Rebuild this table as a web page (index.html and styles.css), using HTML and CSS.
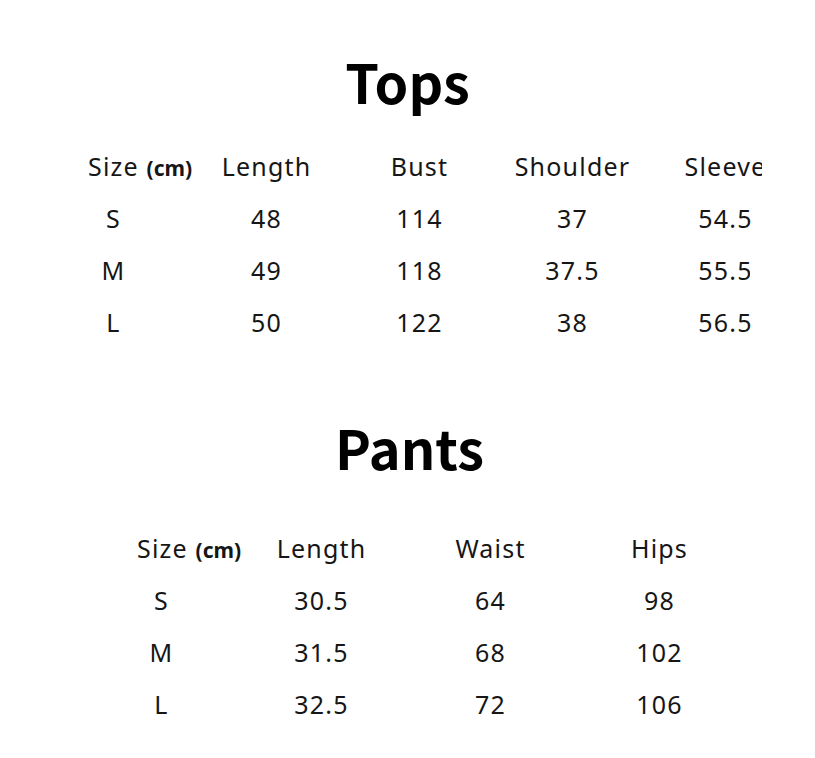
FILE: index.html
```html
<!DOCTYPE html>
<html>
<head>
<meta charset="utf-8">
<link rel="stylesheet" href="styles.css">
</head>
<body>
<div class="page">
  <section class="block tops">
    <h1 class="title">Tops</h1>
    <div class="clip">
      <div class="grid five">
        <div class="cell head first">Size <b class="unit">(cm)</b></div>
        <div class="cell head">Length</div>
        <div class="cell head">Bust</div>
        <div class="cell head">Shoulder</div>
        <div class="cell head">Sleeve</div>
        <div class="cell">S</div><div class="cell">48</div><div class="cell">114</div><div class="cell">37</div><div class="cell">54.5</div>
        <div class="cell">M</div><div class="cell">49</div><div class="cell">118</div><div class="cell">37.5</div><div class="cell cut">55.5</div>
        <div class="cell">L</div><div class="cell">50</div><div class="cell">122</div><div class="cell">38</div><div class="cell">56.5</div>
      </div>
    </div>
  </section>
  <section class="block pants">
    <h1 class="title">Pants</h1>
    <div class="grid four">
      <div class="cell head first">Size <b class="unit">(cm)</b></div>
      <div class="cell head">Length</div>
      <div class="cell head">Waist</div>
      <div class="cell head">Hips</div>
      <div class="cell">S</div><div class="cell">30.5</div><div class="cell">64</div><div class="cell">98</div>
      <div class="cell">M</div><div class="cell">31.5</div><div class="cell">68</div><div class="cell">102</div>
      <div class="cell">L</div><div class="cell">32.5</div><div class="cell">72</div><div class="cell">106</div>
    </div>
  </section>
</div>
</body>
</html>
```
FILE: styles.css
```css
html, body {
  margin: 0;
  padding: 0;
  background: #fff;
}
body {
  width: 815px;
  height: 758px;
  overflow: hidden;
  font-family: "Noto Sans", "Noto Sans CJK SC", sans-serif;
  color: #161616;
}
.page {
  display: flex;
  flex-direction: column;
}
.title {
  margin: 0;
  font-family: "Noto Sans CJK SC", "Noto Sans", sans-serif;
  font-size: 54px;
  font-weight: 700;
  line-height: 60px;
  text-align: center;
  color: #000;
}
.tops {
  padding-top: 51px;
}
.tops .title {
  padding-left: 0;
}
.pants {
  padding-top: 69px;
}
.pants .title {
  padding-left: 4px;
}
.clip {
  margin-left: 37px;
  width: 725px;
  overflow: hidden;
}
.grid {
  display: grid;
  grid-auto-rows: 52px;
}
.five {
  width: 765px;
  grid-template-columns: repeat(5, 153px);
  margin-top: 29px;
}
.four {
  margin-left: 86px;
  grid-template-columns: 151px 169px 169px 169px;
  margin-top: 45px;
}
.cell {
  font-size: 25px;
  letter-spacing: 1.2px;
  line-height: 52px;
  text-align: center;
  white-space: nowrap;
  position: relative;
}
.first {
  text-align: left;
  padding-left: 51px;
}
.unit {
  font-size: 21px;
  font-weight: 700;
  letter-spacing: 0;
}
.cut::after {
  content: "";
  position: absolute;
  left: 101px;
  top: 0;
  width: 40px;
  height: 100%;
  background: #fff;
}
```
